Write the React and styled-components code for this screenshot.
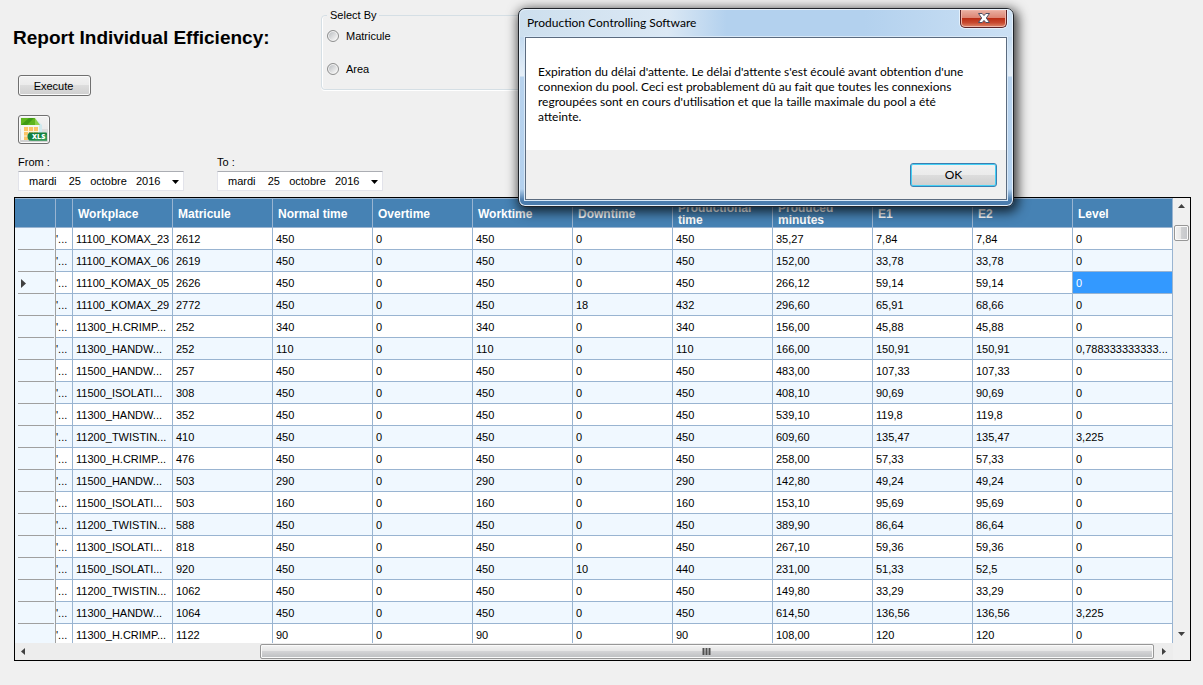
import React, { useState } from "react";
import styled, { createGlobalStyle } from "styled-components";

const GlobalStyle = createGlobalStyle`
  * {
    box-sizing: border-box;
  }

  body {
    margin: 0;
    background: #f0f0f0;
    color: #000;
    font-family: "Liberation Sans", Arial, sans-serif;
    font-size: 11px;
  }
`;

const Page = styled.main`
  padding: 0 12px 24px 14px;
`;

const Top = styled.header`
  display: flex;
  align-items: flex-start;
  padding-top: 8px;
`;

const Actions = styled.div`
  display: flex;
  flex-direction: column;
  align-items: flex-start;
  width: 307px;
  padding: 19px 0 0 4px;
`;

const Title = styled.h1`
  margin: 0 0 26px -5px;
  font-size: 19px;
  line-height: 22px;
`;

const Button = styled.button`
  padding: 0;
  border: 1px solid #707070;
  border-radius: 3px;
  box-shadow: inset 0 0 0 1px #fafafa;
  background: linear-gradient(#f2f2f2 0%, #ebebeb 49%, #dddddd 50%, #cfcfcf 100%);
  color: #000;
  font: inherit;
`;

const ExecuteButton = styled(Button)`
  width: 73px;
  height: 21px;
  margin-bottom: 19px;
  padding-right: 2px;
`;

const ExportButton = styled(Button)`
  display: flex;
  align-items: center;
  justify-content: center;
  width: 32px;
  height: 29px;
`;

const SelectBy = styled.fieldset`
  display: flex;
  flex-direction: column;
  gap: 19px;
  width: 240px;
  height: 82px;
  margin: 0;
  padding: 7px 5px 0;
  border: 1px solid #d5dfe5;
  border-radius: 4px;
  box-shadow: inset 1px 0 #fff, 0 1px #fff;
`;

const Legend = styled.legend`
  padding: 0 3px;
  line-height: 14px;
`;

const Choice = styled.label`
  display: flex;
  align-items: center;
  gap: 7px;
  line-height: 14px;
`;

const Radio = styled.input`
  appearance: none;
  width: 12px;
  height: 12px;
  margin: 0;
  border: 1px solid #8e8f8f;
  border-radius: 50%;
  box-shadow: inset 0 0 0 1px #f4f4f4;
  background: linear-gradient(135deg, #b4b8bc, #f2f2f2 80%);

  &:checked {
    background: radial-gradient(#2b6d99 35%, #e8e8e8 45%);
  }
`;

const Dates = styled.div`
  display: flex;
  gap: 33px;
  padding: 11px 4px 6px;
`;

const DateField = styled.div`
  width: 166px;
`;

const DateLabel = styled.label`
  display: block;
  margin-bottom: 2px;
  line-height: 14px;
`;

const DateBox = styled.div`
  display: flex;
  height: 20px;
  border: 1px solid #e2e3ea;
  border-top-color: #abadb3;
  background: #fff;
`;

const DateInput = styled.input`
  flex: 1;
  min-width: 0;
  padding: 0 0 0 10px;
  border: 0;
  background: none;
  font: inherit;
`;

const PlainButton = styled.button`
  display: flex;
  flex: none;
  align-items: center;
  justify-content: center;
  width: 17px;
  height: 17px;
  padding: 0;
  border: 0;
  background: none;
`;

const CalendarButton = styled(PlainButton)`
  width: 15px;
  height: 19px;
`;

const Grid = styled.section`
  display: grid;
  grid-template-columns: minmax(0, 1fr) 17px;
  border: 1px solid #000;
  background: #f0f0f0;
`;

const Viewport = styled.div`
  max-height: 445px;
  overflow: hidden;
`;

const Table = styled.table`
  width: 100%;
  table-layout: fixed;
  border-collapse: separate;
  border-spacing: 0;
`;

const HeadCell = styled.th`
  width: ${(props) => props.$width || "auto"};
  height: 30px;
  padding: 1px 5px 0;
  border: solid #99b4d1;
  border-width: 1px 1px 1px 0;
  background: #4682b4;
  color: #fff;
  font-size: 12px;
  line-height: 12px;
  text-align: left;
`;

const Row = styled.tr`
  background: ${(props) => (props.$odd ? "#f0f8ff" : "#fff")};
`;

const Cell = styled.td`
  height: 22px;
  padding: 0 0 0 3px;
  overflow: hidden;
  border: solid #99b4d1;
  border-width: 0 1px 1px 0;
  background: ${(props) => (props.$selected ? "#3399ff" : "transparent")};
  color: ${(props) => (props.$selected ? "#fff" : "#000")};
  line-height: 14px;
  text-overflow: ellipsis;
  white-space: nowrap;
`;

const ClippedCell = styled(Cell)`
  padding: 0;
`;

const RowHead = styled.th`
  height: 22px;
  padding: 0 0 0 6px;
  border-right: 1px solid #a0a0a0;
  background: linear-gradient(#a0a0a0, #a0a0a0) 3px 100% / 36px 1px no-repeat #f0f8ff;
`;

const Marker = styled.svg`
  display: block;
`;

const VerticalBar = styled.div`
  display: flex;
  flex-direction: column;
  background: #f0f0f0;
`;

const VerticalThumb = styled.div`
  height: 16px;
  margin: 10px 1px auto;
  border: 1px solid #979797;
  border-radius: 2px;
  box-shadow: inset 0 0 0 1px #fafafa;
  background: linear-gradient(90deg, #f3f3f3, #e6e6e6 49%, #cfd0d2 50%, #c4c6ca);
`;

const HorizontalBar = styled.div`
  display: flex;
  background: #ededed;
`;

const Track = styled.div`
  flex: 228;
`;

const HorizontalThumb = styled.div`
  display: flex;
  flex: 894;
  align-items: center;
  justify-content: center;
  height: 15px;
  margin: 1px 2px 1px 0;
  border: 1px solid #979797;
  border-radius: 2px;
  box-shadow: inset 0 0 0 1px #fafafa;
  background: linear-gradient(#f3f3f3, #e6e6e6 45%, #d3d3d5 50%, #bcbec0);
`;

const Dialog = styled.div`
  position: absolute;
  top: 8px;
  left: 518px;
  width: 496px;
  padding: 0 6px 6px;
  border: 1px solid #20242a;
  border-radius: 7px;
  box-shadow: inset 0 0 0 1px #e6f1fb, 2px 3px 12px 2px rgba(0, 0, 0, 0.75);
  background: linear-gradient(
    #c4dbf0 0,
    #c4dbf0 28px,
    #e6eff8 67px,
    #b7d2ed 68px,
    #b4d1ee 180px,
    #4b7cad 191px,
    #4b7cad 100%
  );
  font-family: Lato, "Segoe UI", sans-serif;
  font-size: 12px;
`;

const DialogBar = styled.div`
  display: flex;
  align-items: flex-start;
  justify-content: space-between;
  height: 28px;
  margin: 0 -5px;
  padding: 0 5px 0 6px;
  border-top: 1px solid #e6f1fb;
  border-radius: 6px 6px 0 0;
  background: linear-gradient(90deg, #cddfee, #dbe8f4 30%, #b3d1ee 42%, #b3d1ee 70%, #cbe0f4);
`;

const DialogTitle = styled.h2`
  margin: 0;
  padding: 5px 0 0 1px;
  font-size: 12px;
  font-weight: 400;
  line-height: 16px;
`;

const CloseButton = styled.button`
  display: flex;
  align-items: center;
  justify-content: center;
  width: 47px;
  height: 18px;
  padding: 0 0 1px;
  border: 1px solid #5b2327;
  border-top: 0;
  border-radius: 0 0 5px 5px;
  box-shadow: inset 0 0 0 1px #f0b5a8, 0 0 0 1px #e6f1fb;
  background: linear-gradient(#eab0a2 0%, #dd8371 48%, #bb2f16 50%, #c8492f 75%, #dd8a6c 100%);
`;

const DialogBody = styled.div`
  border: 1px solid #5b6b7f;
  box-shadow: 0 0 0 1px #d9e9f8;
  background: #f0f0f0;
`;

const Message = styled.p`
  margin: 0;
  padding: 26px 38px 26px 12px;
  background: #fff;
  line-height: 15px;
`;

const DialogFooter = styled.div`
  display: flex;
  justify-content: flex-end;
  padding: 13px 9px 12px;
`;

const OkButton = styled(Button)`
  width: 87px;
  height: 24px;
  padding-bottom: 2px;
  border-color: #3c7fb1;
  box-shadow: inset 0 0 0 1px #45d0f5;
`;

const columns = [
  "Workplace",
  "Matricule",
  "Normal time",
  "Overtime",
  "Worktime",
  "Downtime",
  "Productional time",
  "Produced minutes",
  "E1",
  "E2",
  "Level",
];

const rows = [
  ["11100_KOMAX_23", "2612", "450", "0", "450", "0", "450", "35,27", "7,84", "7,84", "0"],
  ["11100_KOMAX_06", "2619", "450", "0", "450", "0", "450", "152,00", "33,78", "33,78", "0"],
  ["11100_KOMAX_05", "2626", "450", "0", "450", "0", "450", "266,12", "59,14", "59,14", "0"],
  ["11100_KOMAX_29", "2772", "450", "0", "450", "18", "432", "296,60", "65,91", "68,66", "0"],
  ["11300_H.CRIMP...", "252", "340", "0", "340", "0", "340", "156,00", "45,88", "45,88", "0"],
  ["11300_HANDW...", "252", "110", "0", "110", "0", "110", "166,00", "150,91", "150,91", "0,788333333333..."],
  ["11500_HANDW...", "257", "450", "0", "450", "0", "450", "483,00", "107,33", "107,33", "0"],
  ["11500_ISOLATI...", "308", "450", "0", "450", "0", "450", "408,10", "90,69", "90,69", "0"],
  ["11300_HANDW...", "352", "450", "0", "450", "0", "450", "539,10", "119,8", "119,8", "0"],
  ["11200_TWISTIN...", "410", "450", "0", "450", "0", "450", "609,60", "135,47", "135,47", "3,225"],
  ["11300_H.CRIMP...", "476", "450", "0", "450", "0", "450", "258,00", "57,33", "57,33", "0"],
  ["11500_HANDW...", "503", "290", "0", "290", "0", "290", "142,80", "49,24", "49,24", "0"],
  ["11500_ISOLATI...", "503", "160", "0", "160", "0", "160", "153,10", "95,69", "95,69", "0"],
  ["11200_TWISTIN...", "588", "450", "0", "450", "0", "450", "389,90", "86,64", "86,64", "0"],
  ["11300_ISOLATI...", "818", "450", "0", "450", "0", "450", "267,10", "59,36", "59,36", "0"],
  ["11500_ISOLATI...", "920", "450", "0", "450", "10", "440", "231,00", "51,33", "52,5", "0"],
  ["11200_TWISTIN...", "1062", "450", "0", "450", "0", "450", "149,80", "33,29", "33,29", "0"],
  ["11300_HANDW...", "1064", "450", "0", "450", "0", "450", "614,50", "136,56", "136,56", "3,225"],
  ["11300_H.CRIMP...", "1122", "90", "0", "90", "0", "90", "108,00", "120", "120", "0"],
];

const CURRENT_ROW = 2;
const DATE = "mardi\u00a0\u00a0\u00a0 25\u00a0\u00a0 octobre\u00a0\u00a0 2016";

const arrows = {
  up: "M0 4 L3.5 0 L7 4 Z",
  down: "M0 0 L7 0 L3.5 4 Z",
  left: "M4 0 L4 7 L0 3.5 Z",
  right: "M0 0 L4 3.5 L0 7 Z",
};

function ArrowButton({ direction, label }) {
  return (
    <PlainButton type="button" aria-label={label}>
      <svg width="7" height="7" viewBox={direction === "up" || direction === "down" ? "0 -1 7 7" : "-1 0 7 7"}>
        <path d={arrows[direction]} fill="#404040" />
      </svg>
    </PlainButton>
  );
}

function XlsIcon() {
  return (
    <svg width="28" height="25" viewBox="0 0 28 25">
      <path d="M1 1h14l6 6v16H1z" fill="#f4f7f4" />
      <path d="M15 1l7 7v14h-3V8z" fill="#cfe9ee" />
      <path d="M1 1h14v7H1z" fill="#5fb51f" />
      <path d="M1 8L9 1h5L7 8z" fill="#3f9a14" />
      <path d="M15 1l5 7h-5z" fill="#8bd04a" />
      <path d="M4 10h14v13H4z" fill="#fbc568" />
      <path d="M4 14.5h14M4 19h14M8.5 10v13M13.5 10v13" stroke="#fdf0d6" />
      <path d="M9 15.5h17a1 1 0 0 1 1 1v7H9q-3-4 0-8z" fill="#13803f" />
      <path d="M9 23.5q9-1 18-6v6z" fill="#2f9a54" />
      <text x="12" y="22" fill="#fff" fontFamily="Open Sans, sans-serif" fontSize="7" fontWeight="800">
        XLS
      </text>
    </svg>
  );
}

function DatePicker({ id, label }) {
  return (
    <DateField>
      <DateLabel htmlFor={id}>{label}</DateLabel>
      <DateBox>
        <DateInput id={id} defaultValue={DATE} />
        <CalendarButton type="button" aria-label="Open calendar">
          <svg width="7" height="4" viewBox="0 0 7 4">
            <path d="M0 0h7L3.5 4z" />
          </svg>
        </CalendarButton>
      </DateBox>
    </DateField>
  );
}

function ReportTable() {
  return (
    <Table>
      <thead>
        <tr>
          <HeadCell $width="41px" />
          <HeadCell $width="17px" />
          {columns.map((name) => (
            <HeadCell key={name} scope="col">
              {name}
            </HeadCell>
          ))}
        </tr>
      </thead>
      <tbody>
        {rows.map((row, index) => (
          <Row key={index} $odd={index % 2 === 1}>
            <RowHead scope="row">
              {index === CURRENT_ROW && (
                <Marker width="5" height="9" viewBox="0 0 5 9">
                  <path d="M0 0L5 4.5L0 9z" fill="#404040" />
                </Marker>
              )}
            </RowHead>
            <ClippedCell>'...</ClippedCell>
            {row.map((value, column) => (
              <Cell
                key={columns[column]}
                $selected={index === CURRENT_ROW && column === columns.length - 1}
              >
                {value}
              </Cell>
            ))}
          </Row>
        ))}
      </tbody>
    </Table>
  );
}

function MessageBox({ onClose }) {
  return (
    <Dialog role="dialog" aria-labelledby="dialog-title">
      <DialogBar>
        <DialogTitle id="dialog-title">Production Controlling Software</DialogTitle>
        <CloseButton type="button" aria-label="Close" onClick={onClose}>
          <svg width="12" height="10" viewBox="0 0 12 10">
            <path
              d="M.5 .5h3.7L6 2.600 7.800.5h3.700L8.300 5l3.200 4.500H7.800L6 7.400 4.200 9.500H.5L3.700 5z"
              fill="#fff"
              stroke="#4c4f63"
            />
          </svg>
        </CloseButton>
      </DialogBar>
      <DialogBody>
        <Message>
          Expiration du délai d'attente. Le délai d'attente s'est écoulé avant obtention d'une
          connexion du pool. Ceci est probablement dû au fait que toutes les connexions regroupées
          sont en cours d'utilisation et que la taille maximale du pool a été atteinte.
        </Message>
        <DialogFooter>
          <OkButton type="button" onClick={onClose}>
            OK
          </OkButton>
        </DialogFooter>
      </DialogBody>
    </Dialog>
  );
}

function App() {
  const [open, setOpen] = useState(true);

  return (
    <>
      <GlobalStyle />
      <Page>
        <Top>
          <Actions>
            <Title>Report Individual Efficiency:</Title>
            <ExecuteButton type="button">Execute</ExecuteButton>
            <ExportButton type="button" aria-label="Export">
              <XlsIcon />
            </ExportButton>
          </Actions>
          <SelectBy>
            <Legend>Select By</Legend>
            <Choice>
              <Radio type="radio" name="select-by" />
              Matricule
            </Choice>
            <Choice>
              <Radio type="radio" name="select-by" />
              Area
            </Choice>
          </SelectBy>
        </Top>
        <Dates>
          <DatePicker id="from" label="From :" />
          <DatePicker id="to" label="To :" />
        </Dates>
        <Grid>
          <Viewport>
            <ReportTable />
          </Viewport>
          <VerticalBar>
            <ArrowButton direction="up" label="Scroll up" />
            <VerticalThumb />
            <ArrowButton direction="down" label="Scroll down" />
          </VerticalBar>
          <HorizontalBar>
            <ArrowButton direction="left" label="Scroll left" />
            <Track />
            <HorizontalThumb>
              <svg width="9" height="7" viewBox="0 0 9 7">
                <path d="M1.5 0v7M4.5 0v7M7.5 0v7" stroke="#505050" strokeWidth="2" />
              </svg>
            </HorizontalThumb>
            <ArrowButton direction="right" label="Scroll right" />
          </HorizontalBar>
        </Grid>
      </Page>
      {open && <MessageBox onClose={() => setOpen(false)} />}
    </>
  );
}

export default App;
